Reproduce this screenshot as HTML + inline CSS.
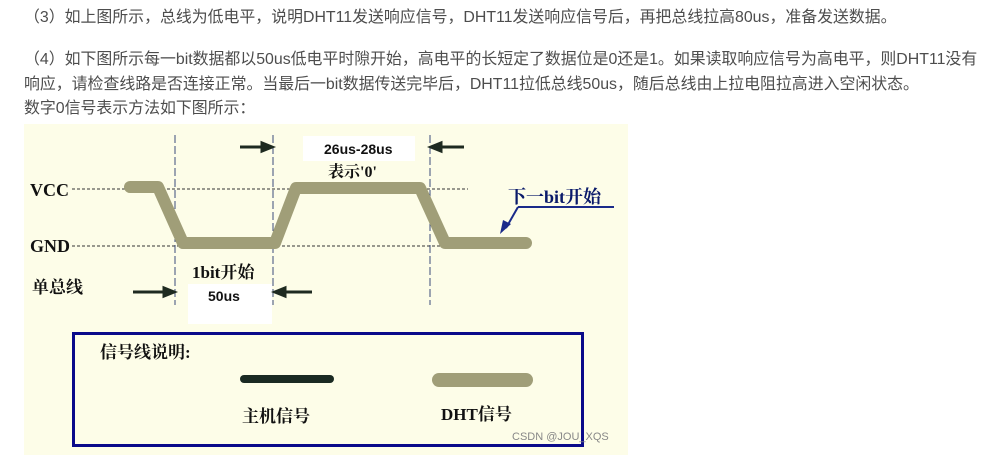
<!DOCTYPE html>
<html><head><meta charset="utf-8"><style>
body{margin:0;width:988px;height:455px;background:#fff;position:relative;overflow:hidden;font-family:"Liberation Sans","Noto Sans CJK SC",sans-serif;}
.t{position:absolute;left:24px;font-size:15.9px;color:#4d4d4d;white-space:nowrap;line-height:20px;}
</style></head><body>
<div class="t" style="top:8px">（3）如上图所示，总线为低电平，说明DHT11发送响应信号，DHT11发送响应信号后，再把总线拉高80us，准备发送数据。</div>
<div class="t" style="top:50px">（4）如下图所示每一bit数据都以50us低电平时隙开始，高电平的长短定了数据位是0还是1。如果读取响应信号为高电平，则DHT11没有</div>
<div class="t" style="top:75px">响应，请检查线路是否连接正常。当最后一bit数据传送完毕后，DHT11拉低总线50us，随后总线由上拉电阻拉高进入空闲状态。</div>
<div class="t" style="top:99px">数字0信号表示方法如下图所示：</div>
<svg style="position:absolute;left:24px;top:124px" width="604" height="331" viewBox="24 124 604 331">
<rect x="24" y="124" width="604" height="331" fill="#fdfde8"/>
<rect x="303" y="136" width="112" height="25" fill="#fff"/>
<rect x="188" y="284" width="84" height="40" fill="#fff"/>
<g stroke="#333" stroke-dasharray="3,2" stroke-width="1">
<line x1="72" y1="189" x2="468" y2="189"/>
<line x1="72" y1="246" x2="468" y2="246"/>
</g>
<g stroke="#3a4a7a" stroke-dasharray="8,3" stroke-width="1">
<line x1="175" y1="135" x2="175" y2="305"/>
<line x1="273" y1="135" x2="273" y2="305"/>
<line x1="430" y1="135" x2="430" y2="305"/>
</g>
<polyline points="130,187 158,187 183,243 275,243 296,188 420,188 445,243 526,243" fill="none" stroke="#a09e78" stroke-width="12" stroke-linejoin="round" stroke-linecap="round"/>
<g stroke="#1e2a20" stroke-width="3" fill="#1e2a20">
<line x1="240" y1="147" x2="266" y2="147"/><polygon points="272,147 262,143 262,151"/>
<line x1="438" y1="147" x2="464" y2="147"/><polygon points="431,147 441,143 441,151"/>
<line x1="133" y1="292" x2="168" y2="292"/><polygon points="174,292 164,288 164,296"/>
<line x1="282" y1="292" x2="312" y2="292"/><polygon points="275,292 285,288 285,296"/>
</g>
<line x1="518" y1="207" x2="614" y2="207" stroke="#1a2a8a" stroke-width="2"/>
<line x1="518" y1="207" x2="506" y2="228" stroke="#1a2a8a" stroke-width="2"/>
<polygon points="500,234 503,220 511,224" fill="#1a2a8a"/>
<g font-family="Liberation Serif,Noto Serif CJK SC,serif" font-weight="bold" fill="#111">
<text x="30" y="196" font-size="18">VCC</text>
<text x="30" y="252" font-size="18">GND</text>
<text x="32" y="293" font-size="17">单总线</text>
<text x="324" y="154" font-size="14" font-family="Liberation Sans,Noto Sans CJK SC,sans-serif">26us-28us</text>
<text x="328" y="177" font-size="16">表示'0'</text>
<text x="192" y="278" font-size="17">1bit开始</text>
<text x="208" y="301" font-size="14" font-family="Liberation Sans,sans-serif">50us</text>
<text x="508" y="203" font-size="18" fill="#0a1a6a">下一bit开始</text>
</g>
<rect x="73.5" y="333.5" width="509" height="112" fill="none" stroke="#0a0a8a" stroke-width="3"/>
<line x1="244" y1="379" x2="330" y2="379" stroke="#1a2a22" stroke-width="8" stroke-linecap="round"/>
<line x1="439" y1="380" x2="526" y2="380" stroke="#a09e78" stroke-width="14" stroke-linecap="round"/>
<g font-family="Liberation Serif,Noto Serif CJK SC,serif" font-weight="bold" fill="#111" font-size="17">
<text x="100" y="358">信号线说明:</text>
<text x="242" y="422">主机信号</text>
<text x="441" y="420">DHT信号</text>
</g>
<text x="512" y="440" font-size="11" fill="#888" font-family="Liberation Sans,sans-serif">CSDN @JOU_XQS</text>
</svg>
</body></html>
